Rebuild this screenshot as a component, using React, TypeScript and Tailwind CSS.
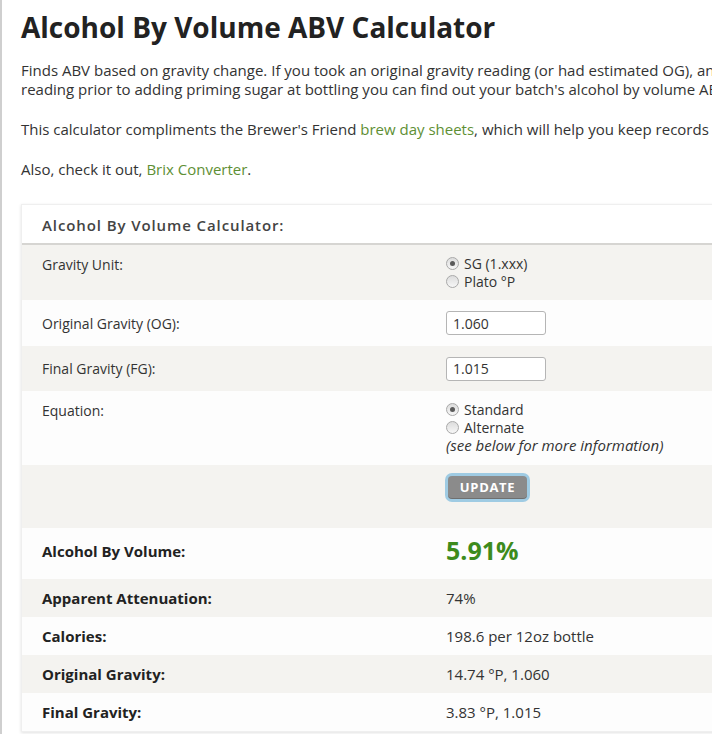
import React, { useState } from 'react';

const Radio: React.FC<{ checked: boolean; label: string; onClick: () => void }> = ({ checked, label, onClick }) => (
  <label className="flex items-center gap-[5px] h-[18px] cursor-pointer" onClick={onClick}>
    <span className="w-[13px] h-[13px] rounded-full border border-[#a9a9a9] bg-gradient-to-b from-[#dcdcdc] to-[#f7f7f7] flex items-center justify-center">
      {checked && <span className="w-[5px] h-[5px] rounded-full bg-[#5a5a5a]" />}
    </span>
    <span>{label}</span>
  </label>
);

const App: React.FC = () => {
  const [unit, setUnit] = useState('sg');
  const [equation, setEquation] = useState('standard');
  const [og, setOg] = useState('1.060');
  const [fg, setFg] = useState('1.015');

  const results = [
    { label: 'Apparent Attenuation:', value: '74%', bg: 'bg-[#f4f3f0]' },
    { label: 'Calories:', value: '198.6 per 12oz bottle', bg: 'bg-[#fdfdfd]' },
    { label: 'Original Gravity:', value: '14.74 °P, 1.060', bg: 'bg-[#f4f3f0]' },
    { label: 'Final Gravity:', value: '3.83 °P, 1.015', bg: 'bg-[#fdfdfd]' },
  ];

  return (
    <div
      className="w-[712px] h-[734px] overflow-hidden bg-white border-l-2 border-[#cfcfcf] text-[14px] text-[#333]"
      style={{ fontFamily: '"Open Sans", "Liberation Sans", sans-serif' }}
    >
      <div className="w-[1000px] pl-[19px]">
        <h1 className="text-[28px] font-bold text-[#222] leading-[38px] pt-[8px]">
          Alcohol By Volume ABV Calculator
        </h1>

        <div className="text-[15px]">
          <p className="mt-[15px] leading-[19px] whitespace-nowrap">
            Finds ABV based on gravity change. If you took an original gravity reading (or had estimated OG), and a final gravity
            <br />
            reading prior to adding priming sugar at bottling you can find out your batch's alcohol by volume ABV.
          </p>

          <p className="mt-[21px] leading-[19px] whitespace-nowrap">
            This calculator compliments the Brewer's Friend{' '}
            <a href="#" className="text-[#5e8f34]">brew day sheets</a>, which will help you keep records of your brewing sessions.
          </p>

          <p className="mt-[21px] leading-[19px]">
            Also, check it out, <a href="#" className="text-[#5e8f34]">Brix Converter</a>.
          </p>
        </div>

        {/* Calculator panel */}
        <div className="mt-[25px] w-[860px] border border-[#efefef] shadow-[0_1px_3px_rgba(0,0,0,0.12)]">
          <div className="h-[40px] px-[20px] pt-[2px] flex items-center bg-white border-b-2 border-[#d6d5d2] text-[15px] font-semibold tracking-[0.06em] text-[#444]">
            Alcohol By Volume Calculator:
          </div>

          <div className="grid grid-cols-[404px_1fr] px-[20px] bg-[#f4f3f0] h-[55px] pt-[9px]">
            <div>Gravity Unit:</div>
            <div>
              <Radio checked={unit === 'sg'} label="SG (1.xxx)" onClick={() => setUnit('sg')} />
              <Radio checked={unit === 'plato'} label="Plato °P" onClick={() => setUnit('plato')} />
            </div>
          </div>

          <div className="grid grid-cols-[404px_1fr] items-center px-[20px] bg-[#fdfdfd] h-[46px]">
            <div>Original Gravity (OG):</div>
            <input
              value={og}
              onChange={(e) => setOg(e.target.value)}
              className="w-[100px] h-[24px] border border-[#b5b5b5] rounded-[3px] px-[6px] text-[14px] text-[#333] bg-white outline-none"
            />
          </div>

          <div className="grid grid-cols-[404px_1fr] items-center px-[20px] bg-[#f4f3f0] h-[45px]">
            <div>Final Gravity (FG):</div>
            <input
              value={fg}
              onChange={(e) => setFg(e.target.value)}
              className="w-[100px] h-[24px] border border-[#b5b5b5] rounded-[3px] px-[6px] text-[14px] text-[#333] bg-white outline-none"
            />
          </div>

          <div className="grid grid-cols-[404px_1fr] px-[20px] bg-[#fdfdfd] h-[74px] pt-[9px]">
            <div>Equation:</div>
            <div>
              <Radio checked={equation === 'standard'} label="Standard" onClick={() => setEquation('standard')} />
              <Radio checked={equation === 'alternate'} label="Alternate" onClick={() => setEquation('alternate')} />
              <div className="italic text-[15px] leading-[18px]">(see below for more information)</div>
            </div>
          </div>

          <div className="grid grid-cols-[404px_1fr] px-[20px] bg-[#f4f3f0] h-[63px] pt-[11px]">
            <div />
            <div>
              <button className="ml-[2px] h-[23px] w-[79px] rounded-[4px] bg-[#8b8b8b] text-white text-[13px] font-bold tracking-[0.05em] ring-[3px] ring-[#9fcbe3] shadow-[inset_0_-1px_0_rgba(0,0,0,0.2)]">
                UPDATE
              </button>
            </div>
          </div>

          <div className="grid grid-cols-[404px_1fr] items-center px-[20px] bg-[#fdfdfd] h-[51px] pb-[5px]">
            <div className="font-bold text-[15px] text-[#222]">Alcohol By Volume:</div>
            <div className="text-[25px] font-bold text-[#3d8b1c] leading-none pb-[2px]">5.91%</div>
          </div>

          {results.map((r) => (
            <div key={r.label} className={`grid grid-cols-[404px_1fr] items-center px-[20px] h-[38px] text-[15px] ${r.bg}`}>
              <div className="font-bold text-[#222]">{r.label}</div>
              <div>{r.value}</div>
            </div>
          ))}
        </div>
      </div>
    </div>
  );
};

export default App;
